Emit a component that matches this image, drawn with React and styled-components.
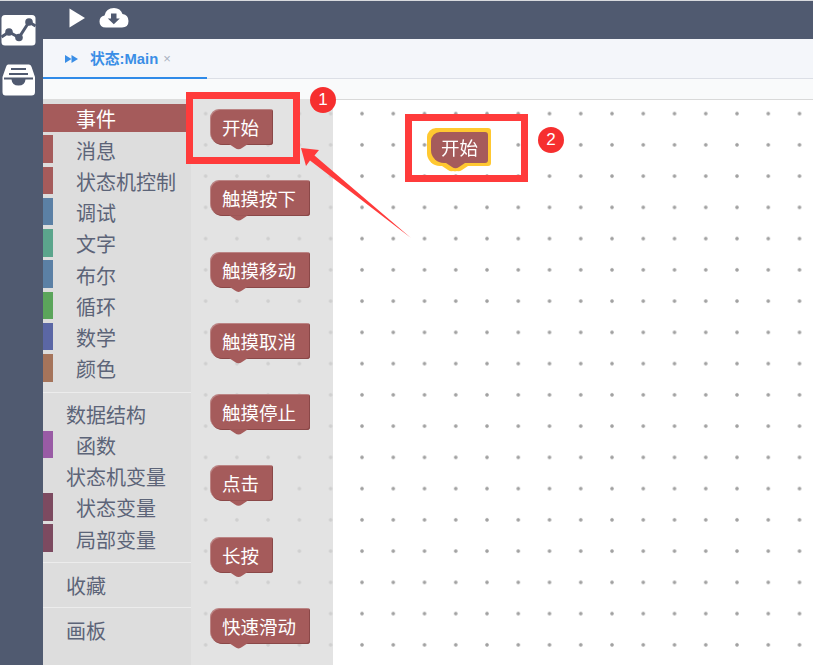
import React from "react";
import styled, { createGlobalStyle } from "styled-components";

const Global = createGlobalStyle`
  html, body { margin: 0; padding: 0; height: 100%; overflow: hidden; background: #fff; }
  #root { height: 100%; }
  * { box-sizing: border-box; }
`;

const FONT = `"Noto Sans CJK SC", "Liberation Sans", sans-serif`;
const RAIL = "#505a70";
const BLOCK = "#a55b5b";

const Page = styled.div`
  position: relative;
  width: 813px;
  height: 665px;
  overflow: hidden;
  display: grid;
  grid-template-columns: 43px 1fr;
  grid-template-rows: 38px 1fr;
  font-family: ${FONT};
  background: ${RAIL};
  border-top: 1px solid #d8dade;
`;

const Rail = styled.nav`
  grid-row: 1 / 3;
  background: ${RAIL};
  display: flex;
  flex-direction: column;
  align-items: flex-start;
  gap: 18px;
  padding: 13px 0 0 1px;
`;

const RailIcon = styled.svg`
  display: block;
  flex: none;
`;

const TopBar = styled.header`
  background: ${RAIL};
  display: flex;
  align-items: flex-start;
  gap: 13px;
  padding: 6px 0 0 25px;
`;

const ToolIcon = styled.svg`
  display: block;
  flex: none;
`;

const Main = styled.main`
  display: flex;
  flex-direction: column;
  min-height: 0;
  background: #fff;
`;

const TabBar = styled.div`
  height: 40px;
  flex: none;
  background: #f4f6fa;
  border-bottom: 1px solid #dcdfe6;
  display: flex;
`;

const Tab = styled.div`
  width: 164px;
  height: 40px;
  border-bottom: 2px solid #2f8ae8;
  display: flex;
  align-items: center;
  padding: 2px 0 0 22px;
  color: #3a8ee6;
`;

const TabMark = styled.svg`
  display: block;
  flex: none;
  margin-right: 12px;
`;

const TabTitle = styled.span`
  font-size: 14.8px;
  font-weight: 700;
  font-family: "Liberation Sans", "Noto Sans CJK SC", sans-serif;
  line-height: 16px;
`;

const TabClose = styled.span`
  font-size: 13px;
  color: #a9b1c0;
  margin-left: 5px;
  line-height: 16px;
  font-family: "Liberation Sans", sans-serif;
`;

const SubBar = styled.div`
  height: 20px;
  flex: none;
  background: #f9fafb;
`;

const Editor = styled.div`
  flex: 1;
  min-height: 0;
  display: grid;
  grid-template-columns: 148px 142px 1fr;
`;

const Toolbox = styled.aside`
  background: #dddddd;
  padding-top: 5px;
  display: flex;
  flex-direction: column;
`;

const Category = styled.div`
  height: 27.5px;
  flex: none;
  margin-bottom: 3.75px;
  display: flex;
  align-items: center;
  font-size: 20px;
  line-height: 27px;
  color: ${(p) => (p.$selected ? "#ffffff" : "#5c6478")};
  background: ${(p) => (p.$selected ? p.$color : "transparent")};
  padding-left: ${(p) => (p.$heading ? "23px" : "0")};
`;

const Swatch = styled.i`
  display: block;
  flex: none;
  width: 10px;
  height: 100%;
  margin-right: 23px;
  background: ${(p) => p.$color};
`;

const Label = styled.span`
  display: block;
  position: relative;
  top: 1px;
`;

const Divider = styled.hr`
  flex: none;
  border: 0;
  height: 1px;
  margin: ${(p) => p.$above}px 0 ${(p) => p.$below}px;
  background: #ececec;
`;

const dots = (color) => `
  background-image: radial-gradient(circle at center, ${color} 0, ${color} 1.3px, transparent 2.2px);
  background-size: 31.25px 31.25px;
`;

const Flyout = styled.div`
  background-color: #e3e3e3;
  ${dots("#cfcfcf")}
  background-position: -1px -1px;
  display: flex;
  flex-direction: column;
  align-items: flex-start;
  gap: 35.3px;
  padding: 10px 0 0 19px;
`;

const Block = styled.div`
  position: relative;
  flex: none;
  height: ${(p) => (p.$compact ? "31px" : "36px")};
  padding: ${(p) => (p.$compact ? "0 10px" : "0 14px 0 12px")};
  background: ${BLOCK};
  border-radius: 9px 3px 3px 13px;
  color: #fff;
  font-size: 18.5px;
  line-height: ${(p) => (p.$compact ? "31px" : "36px")};
  white-space: nowrap;
  box-shadow: ${(p) =>
    p.$compact
      ? "none"
      : "inset 1px 1px 0 rgba(255,255,255,.25), inset -1px -1px 0 #8a4848"};
  filter: ${(p) =>
    p.$compact
      ? "drop-shadow(3.5px 0 0 #ffc831) drop-shadow(-3.5px 0 0 #ffc831) drop-shadow(0 3.5px 0 #ffc831) drop-shadow(0 -3.5px 0 #ffc831)"
      : "none"};

  &::after {
    content: "";
    position: absolute;
    left: ${(p) => (p.$compact ? "15px" : "19px")};
    top: 100%;
    width: 19px;
    height: 6px;
    margin-top: ${(p) => (p.$compact ? "0" : "-1px")};
    background: ${BLOCK};
    clip-path: path("M0 0 L6 4 Q9.5 6.6 13 4 L19 0 Z");
  }
`;

const Canvas = styled.div`
  position: relative;
  background-color: #fff;
  border-top: 1px solid #d9d9d9;
  ${dots("#a0a0a0")}
  background-position: 13.4px -2px;
`;

const PlacedBlock = styled.div`
  position: absolute;
  left: ${(p) => p.$x}px;
  top: ${(p) => p.$y}px;
`;

const Marker = styled.div`
  position: absolute;
  left: ${(p) => p.$x}px;
  top: ${(p) => p.$y}px;
  width: ${(p) => p.$w}px;
  height: ${(p) => p.$h}px;
  border: 7px solid #ff3b3b;
  pointer-events: none;
`;

const Badge = styled.div`
  position: absolute;
  left: ${(p) => p.$x}px;
  top: ${(p) => p.$y}px;
  width: 26px;
  height: 26px;
  border-radius: 50%;
  background: #f62f2f;
  color: #fff;
  font: 17px/26px "Liberation Sans", sans-serif;
  text-align: center;
`;

const ArrowArt = styled.svg`
  position: absolute;
  left: 0;
  top: 0;
  pointer-events: none;
`;

const categories = [
  { label: "事件", color: BLOCK, selected: true },
  { label: "消息", color: BLOCK },
  { label: "状态机控制", color: BLOCK },
  { label: "调试", color: "#5b80a5" },
  { label: "文字", color: "#5ba58c" },
  { label: "布尔", color: "#5b80a5" },
  { label: "循环", color: "#5ba55b" },
  { label: "数学", color: "#5b67a5" },
  { label: "颜色", color: "#a5745b" },
];

const dataCategories = [
  { label: "数据结构", heading: true },
  { label: "函数", color: "#995ba5" },
  { label: "状态机变量", heading: true },
  { label: "状态变量", color: "#7c4a60" },
  { label: "局部变量", color: "#7c4a60" },
];

const flyoutBlocks = ["开始", "触摸按下", "触摸移动", "触摸取消", "触摸停止", "点击", "长按", "快速滑动"];

function CategoryRow({ label, color, heading, selected }) {
  if (selected) {
    return (
      <Category $selected $color={color}>
        <Swatch $color={color} />
        <Label>{label}</Label>
      </Category>
    );
  }
  return (
    <Category $heading={heading}>
      {!heading && <Swatch $color={color} />}
      <Label>{label}</Label>
    </Category>
  );
}

export default function App() {
  return (
    <Page>
      <Global />
      <Rail>
        <RailIcon width="35" height="32" viewBox="0 0 35 32">
          <rect x="0.5" y="1" width="34" height="30.5" rx="3.5" fill="#fff" />
          <polyline points="0.5,23 8,18 18,23.5 28,8 34.5,12" fill="none" stroke={RAIL} strokeWidth="3" />
          <circle cx="8" cy="18" r="3.8" fill={RAIL} />
          <circle cx="18" cy="23.5" r="3.8" fill={RAIL} />
          <circle cx="28" cy="8" r="3.8" fill={RAIL} />
        </RailIcon>
        <RailIcon width="35" height="32" viewBox="0 0 35 32">
          <path d="M7 0.5H28Q30 0.5 30.6 3L34 13V28Q34 31.5 30.5 31.5H4.5Q1.5 31.5 1.5 28V13L5 3Q5.6 0.5 7 0.5Z" fill="#fff" />
          <rect x="10" y="4" width="15" height="2" fill={RAIL} />
          <rect x="8" y="9" width="19" height="2" fill={RAIL} />
          <path d="M3 13.5H32V15.5H24.5Q24 21.5 17.5 21.5Q11 21.5 10.5 15.5H3Z" fill={RAIL} />
        </RailIcon>
      </Rail>
      <TopBar>
        <ToolIcon width="18" height="21" viewBox="0 0 18 21">
          <polygon points="1.5,1.5 17,11 1.5,20.5" fill="#fff" />
        </ToolIcon>
        <ToolIcon width="30" height="21" viewBox="0 0 30 21">
          <path d="M7 20.5Q0.5 20.5 0.5 14.5Q0.5 9.5 5.5 8.5Q7 1 15 1Q21.5 1 23.5 7Q29.5 8 29.5 14Q29.5 20.5 23 20.5Z" fill="#fff" />
          <path d="M12 6.5H17.5V11.5H20.8L14.8 17.2L8.8 11.5H12Z" fill={RAIL} />
        </ToolIcon>
      </TopBar>
      <Main>
        <TabBar>
          <Tab>
            <TabMark width="13" height="8" viewBox="0 0 13 8">
              <polygon points="0,0 6.5,4 0,8" fill="#3a8ee6" />
              <polygon points="6.5,0 13,4 6.5,8" fill="#3a8ee6" />
            </TabMark>
            <TabTitle>状态:Main</TabTitle>
            <TabClose>×</TabClose>
          </Tab>
        </TabBar>
        <SubBar />
        <Editor>
          <Toolbox>
            {categories.map((c) => (
              <CategoryRow key={c.label} {...c} />
            ))}
            <Divider $above={6.6} $below={6.6} />
            {dataCategories.map((c) => (
              <CategoryRow key={c.label} {...c} />
            ))}
            <Divider $above={6.6} $below={7} />
            <CategoryRow label="收藏" heading />
            <Divider $above={5.8} $below={7} />
            <CategoryRow label="画板" heading />
          </Toolbox>
          <Flyout>
            {flyoutBlocks.map((b) => (
              <Block key={b}>{b}</Block>
            ))}
          </Flyout>
          <Canvas>
            <PlacedBlock $x={98} $y={32}>
              <Block $compact>开始</Block>
            </PlacedBlock>
          </Canvas>
        </Editor>
      </Main>
      <Marker $x={186} $y={91} $w={114} $h={72} />
      <Marker $x={405} $y={113} $w={123} $h={68} />
      <Badge $x={310} $y={86}>1</Badge>
      <Badge $x={538} $y={126}>2</Badge>
      <ArrowArt width="813" height="665" viewBox="0 0 813 665">
        <polygon points="301,147 319,149 314.5,154.5 411,237 310,159.5 306,165" fill="#ff3b3b" />
      </ArrowArt>
    </Page>
  );
}
